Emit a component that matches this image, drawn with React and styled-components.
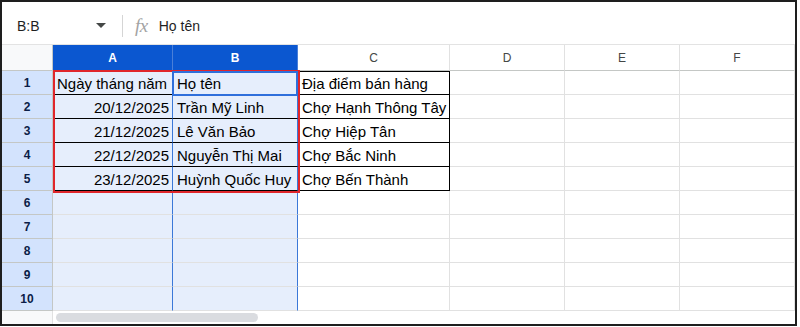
import React from "react";
import styled, { createGlobalStyle } from "styled-components";

const GlobalStyle = createGlobalStyle`
  html, body {
    margin: 0;
    padding: 0;
    background: #ffffff;
  }
  * {
    box-sizing: border-box;
  }
`;

const COLS = [
  { key: "A", width: 120, selected: true },
  { key: "B", width: 125, selected: true },
  { key: "C", width: 152 },
  { key: "D", width: 115 },
  { key: "E", width: 115 },
  { key: "F", width: 115 },
];

const DATA = [
  ["Ngày tháng năm", "Họ tên", "Địa điểm bán hàng"],
  ["20/12/2025", "Trần Mỹ Linh", "Chợ Hạnh Thông Tây"],
  ["21/12/2025", "Lê Văn Bảo", "Chợ Hiệp Tân"],
  ["22/12/2025", "Nguyễn Thị Mai", "Chợ Bắc Ninh"],
  ["23/12/2025", "Huỳnh Quốc Huy", "Chợ Bến Thành"],
];

const Frame = styled.div`
  width: 797px;
  height: 326px;
  border: 2px solid #1e1e1e;
  display: flex;
  flex-direction: column;
  background: #fff;
  font-family: "Liberation Sans", Arial, sans-serif;
  overflow: hidden;
`;

const Toolbar = styled.div`
  height: 43px;
  flex: none;
  display: flex;
  align-items: center;
  border-bottom: 1px solid #e3e3e3;
  padding: 5px 0 0 15px;
`;

const NameBox = styled.div`
  width: 97px;
  display: flex;
  align-items: center;
  justify-content: space-between;
  font-size: 14px;
  color: #1f1f1f;
  padding-right: 8px;
`;

const Caret = styled.span`
  width: 0;
  height: 0;
  border-left: 5px solid transparent;
  border-right: 5px solid transparent;
  border-top: 5px solid #444746;
`;

const Separator = styled.div`
  width: 1px;
  height: 22px;
  background: #d5d5d5;
  margin: 0 12px 0 8px;
`;

const Fx = styled.span`
  font-family: "Liberation Serif", "Times New Roman", serif;
  font-style: italic;
  font-size: 19px;
  color: #a3a3a3;
  letter-spacing: -0.5px;
  margin-right: 11px;
`;

const Formula = styled.span`
  font-size: 14px;
  color: #1f1f1f;
`;

const Grid = styled.div`
  position: relative;
  flex: none;
  display: grid;
  grid-template-columns: 51px ${COLS.map((c) => `${c.width}px`).join(" ")};
  grid-template-rows: 26px repeat(10, 24px);
`;

const Corner = styled.div`
  background: #f8f9fa;
  border-right: 1px solid #c4c7c5;
  border-bottom: 1px solid #c4c7c5;
`;

const ColHead = styled.div`
  display: flex;
  align-items: center;
  justify-content: center;
  font-size: 12px;
  background: ${(p) => (p.$selected ? "#0b57d0" : "#ffffff")};
  color: ${(p) => (p.$selected ? "#ffffff" : "#444746")};
  font-weight: ${(p) => (p.$selected ? 700 : 400)};
  border-right: 1px solid ${(p) => (p.$selected ? "#4a7fd8" : "#e1e1e1")};
  border-bottom: 1px solid #c4c7c5;
`;

const RowHead = styled.div`
  display: flex;
  align-items: center;
  justify-content: center;
  font-size: 12px;
  font-weight: 700;
  background: #d3e3fd;
  color: #0b1d47;
  border-right: 1px solid #c4c7c5;
  border-bottom: 1px solid #c4c7c5;
`;

const Cell = styled.div`
  display: flex;
  align-items: flex-end;
  justify-content: ${(p) => (p.$right ? "flex-end" : "flex-start")};
  padding: 0 3px 2px 4px;
  font-size: 15px;
  color: #000;
  white-space: nowrap;
  overflow: hidden;
  background: ${(p) => (p.$selected ? "#e6eefc" : "#ffffff")};
  border-right: 1px solid
    ${(p) => (p.$selected ? "#3b78d8" : p.$bordered ? "#000" : "#e1e1e1")};
  border-bottom: 1px solid ${(p) => (p.$bordered ? "#000" : "#e1e1e1")};
  box-shadow: ${(p) => (p.$topEdge ? "inset 0 1px 0 #000" : "none")};
`;

const RangeBox = styled.div`
  position: absolute;
  left: 51px;
  top: 25px;
  width: 247px;
  height: 123px;
  border: 2px solid #e0262b;
  pointer-events: none;
`;

const ActiveCell = styled.div`
  position: absolute;
  left: 170px;
  top: 26px;
  width: 126px;
  height: 25px;
  border: 2px solid #2f6fdb;
  pointer-events: none;
`;

const ScrollRow = styled.div`
  flex: 1;
  display: flex;
  background: #f8f9fa;
`;

const ScrollGutter = styled.div`
  width: 51px;
  border-right: 1px solid #e1e1e1;
`;

const ScrollTrack = styled.div`
  flex: 1;
  padding: 2px 0 0 3px;
  background: #fff;
`;

const Thumb = styled.div`
  width: 202px;
  height: 9px;
  border-radius: 5px;
  background: #dadce0;
`;

function Sheet() {
  const rows = [];
  for (let r = 0; r < 10; r++) {
    rows.push(<RowHead key={`h${r}`}>{r + 1}</RowHead>);
    COLS.forEach((col, c) => {
      const value = DATA[r] && DATA[r][c];
      const bordered = r < DATA.length && c < 3;
      rows.push(
        <Cell
          key={`${r}-${col.key}`}
          $selected={col.selected}
          $bordered={bordered}
          $topEdge={bordered && r === 0 && !col.selected}
          $right={c === 0 && r > 0}
        >
          {value}
        </Cell>
      );
    });
  }

  return (
    <Grid>
      <Corner />
      {COLS.map((col) => (
        <ColHead key={col.key} $selected={col.selected}>
          {col.key}
        </ColHead>
      ))}
      {rows}
      <RangeBox />
      <ActiveCell />
    </Grid>
  );
}

export default function App() {
  return (
    <>
      <GlobalStyle />
      <Frame>
        <Toolbar>
          <NameBox>
            B:B
            <Caret />
          </NameBox>
          <Separator />
          <Fx>fx</Fx>
          <Formula>Họ tên</Formula>
        </Toolbar>
        <Sheet />
        <ScrollRow>
          <ScrollGutter />
          <ScrollTrack>
            <Thumb />
          </ScrollTrack>
        </ScrollRow>
      </Frame>
    </>
  );
}
